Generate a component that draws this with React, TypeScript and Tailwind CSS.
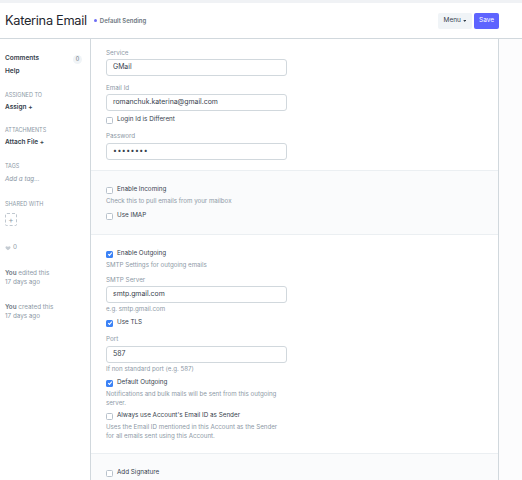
import React from "react";

const font = { fontFamily: "Inter, 'Liberation Sans', sans-serif" };

function Check({ on }: { on?: boolean }) {
  return on ? (
    <span className="flex h-[7px] w-[7px] items-center justify-center rounded-[1.5px] bg-[#3b82f6]">
      <svg viewBox="0 0 10 10" className="h-[6px] w-[6px]">
        <path d="M2 5.2 L4.2 7.3 L8 2.8" fill="none" stroke="white" strokeWidth="1.8" />
      </svg>
    </span>
  ) : (
    <span className="h-[7px] w-[7px] rounded-[1.5px] border border-[#b8c2cc] bg-white" />
  );
}

function CheckRow({ label, on, className = "" }: { label: string; on?: boolean; className?: string }) {
  return (
    <div className={`flex h-[10px] items-center gap-[4px] text-[6.3px] text-[#36414c] ${className}`}>
      <Check on={on} />
      <span>{label}</span>
    </div>
  );
}

function Label({ text, className = "" }: { text: string; className?: string }) {
  return <div className={`h-[10px] text-[6.3px] leading-[10px] text-[#8d99a6] ${className}`}>{text}</div>;
}

function Input({ value, className = "" }: { value: string; className?: string }) {
  return (
    <div
      className={`flex h-[17px] w-[181px] items-center rounded-[3px] border border-[#d1d8dd] bg-white px-[6px] text-[6.9px] text-[#36414c] ${className}`}
    >
      {value}
    </div>
  );
}

function Help({ children, className = "" }: { children: React.ReactNode; className?: string }) {
  return <div className={`whitespace-nowrap text-[6.2px] leading-[9px] text-[#8d99a6] ${className}`}>{children}</div>;
}

function SideHead({ text, className = "" }: { text: string; className?: string }) {
  return <div className={`h-[8px] text-[5.5px] uppercase leading-[8px] text-[#8d99a6] ${className}`}>{text}</div>;
}

export default function App() {
  return (
    <div className="h-[480px] w-[522px] overflow-hidden bg-white" style={font}>
      <div className="h-[3px] bg-[#f0f2f5]" />
      <div className="flex h-[36px] items-center justify-between border-b border-[#d1d8dd] pl-[5px] pr-[23px]">
        <div className="flex items-center">
          <span className="text-[12.8px] tracking-[-0.3px] text-[#1f272e]">Katerina Email</span>
          <span className="ml-[7px] h-[3px] w-[3px] rounded-full bg-[#6d6df5]" />
          <span className="ml-[3px] text-[6px] font-semibold text-[#6c7680]">Default Sending</span>
        </div>
        <div className="flex items-center gap-[2px]">
          <div className="flex h-[16px] w-[34px] items-center justify-center gap-[2px] rounded-[2px] bg-[#f0f4f7] text-[6.5px] text-[#36414c]">
            Menu
            <svg viewBox="0 0 6 4" className="h-[2px] w-[3.5px]">
              <path d="M0 0 L6 0 L3 4 Z" fill="#36414c" />
            </svg>
          </div>
          <div className="flex h-[16px] w-[25px] items-center justify-center rounded-[2px] bg-[#5e64ff] text-[6.5px] text-white">
            Save
          </div>
        </div>
      </div>

      <div className="flex">
        <div className="h-[441px] w-[91px] border-r border-[#d1d8dd] pl-[5px] pr-[8px] pt-[15px] text-[6.5px] text-[#36414c]">
          <div className="flex h-[10px] items-center justify-between font-semibold">
            <span>Comments</span>
            <span className="flex h-[9px] w-[9px] items-center justify-center rounded-full bg-[#f0f4f7] text-[5.5px] font-normal text-[#6c7680]">
              0
            </span>
          </div>
          <div className="mt-[2px] h-[10px] leading-[10px] font-semibold">Help</div>
          <SideHead text="Assigned to" className="mt-[15px]" />
          <div className="mt-[3px] h-[10px] leading-[10px] font-semibold">Assign +</div>
          <SideHead text="Attachments" className="mt-[14px]" />
          <div className="mt-[3px] h-[10px] leading-[10px] font-semibold">Attach File +</div>
          <SideHead text="Tags" className="mt-[15px]" />
          <div className="mt-[4px] h-[10px] text-[6.3px] italic leading-[10px] text-[#8d99a6]">Add a tag...</div>
          <SideHead text="Shared with" className="mt-[16px]" />
          <div className="mt-[5px] flex h-[13px] w-[12px] items-center justify-center rounded-[2px] border border-dashed border-[#c0c8d0] text-[8px] text-[#8d99a6]">
            +
          </div>
          <div className="mt-[17px] flex h-[10px] items-center gap-[2px] text-[6.3px] text-[#8d99a6]">
            <svg viewBox="0 0 24 24" className="h-[6px] w-[6px]">
              <path
                d="M12 21s-7.5-4.6-9.6-9.2C1 8.6 3 5 6.6 5c2.2 0 3.8 1.3 5.4 3.2C13.6 6.3 15.2 5 17.4 5 21 5 23 8.6 21.6 11.8 19.5 16.4 12 21 12 21z"
                fill="#c4cbd2"
              />
            </svg>
            0
          </div>
          <div className="mt-[16px] text-[6.3px] leading-[9px] text-[#8d99a6]">
            <div><span className="font-semibold text-[#6c7680]">You</span> edited this</div>
            <div>17 days ago</div>
          </div>
          <div className="mt-[16px] text-[6.3px] leading-[9px] text-[#8d99a6]">
            <div><span className="font-semibold text-[#6c7680]">You</span> created this</div>
            <div>17 days ago</div>
          </div>
        </div>

        <div className="w-[408px] border-r border-[#d1d8dd]">
          <div className="px-[15px] pb-[10px] pt-[9px]">
            <Label text="Service" />
            <Input value="GMail" className="mt-[1px]" />
            <Label text="Email Id" className="mt-[7px]" />
            <Input value="romanchuk.katerina@gmail.com" className="mt-[1px]" />
            <CheckRow label="Login Id is Different" className="mt-[4px]" />
            <Label text="Password" className="mt-[6px]" />
            <Input value="••••••••" className="mt-[2px] tracking-[0.5px]" />
          </div>
          <div className="border-t border-[#ebeff2] bg-[#fafbfc] px-[15px] pb-[13px] pt-[14px]">
            <CheckRow label="Enable Incoming" />
            <Help className="mt-[1px]">Check this to pull emails from your mailbox</Help>
            <CheckRow label="Use IMAP" className="mt-[6px]" />
          </div>
          <div className="border-t border-[#ebeff2] px-[15px] pb-[13px] pt-[14px]">
            <CheckRow label="Enable Outgoing" on />
            <Help className="mt-[1px]">SMTP Settings for outgoing emails</Help>
            <Label text="SMTP Server" className="mt-[6px]" />
            <Input value="smtp.gmail.com" className="mt-[1px]" />
            <Help className="mt-[1px]">e.g. smtp.gmail.com</Help>
            <CheckRow label="Use TLS" on className="mt-[5px]" />
            <Label text="Port" className="mt-[6px]" />
            <Input value="587" className="mt-[2px]" />
            <Help className="mt-[1px]">If non standard port (e.g. 587)</Help>
            <CheckRow label="Default Outgoing" on className="mt-[5px]" />
            <Help className="mt-[1px]">
              Notifications and bulk mails will be sent from this outgoing
              <br />
              server.
            </Help>
            <CheckRow label="Always use Account's Email ID as Sender" className="mt-[4px]" />
            <Help className="mt-[1px]">
              Uses the Email ID mentioned in this Account as the Sender
              <br />
              for all emails sent using this Account.
            </Help>
          </div>
          <div className="h-[40px] border-t border-[#ebeff2] bg-[#fafbfc] px-[15px] pt-[14px]">
            <CheckRow label="Add Signature" />
          </div>
        </div>
        <div className="flex-1 bg-[#fcfcfd]" />
      </div>
    </div>
  );
}
